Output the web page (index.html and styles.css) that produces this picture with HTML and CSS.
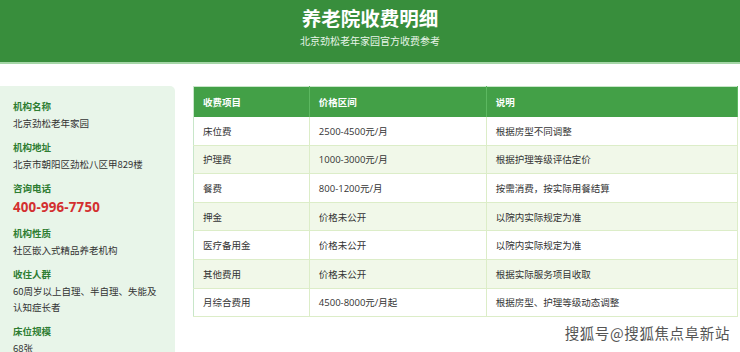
FILE: index.html
```html
<!DOCTYPE html>
<html lang="zh-CN">
<head>
<meta charset="utf-8">
<title>养老院收费明细</title>
<link rel="stylesheet" href="styles.css">
</head>
<body>
<header class="hero">
  <h1 class="hero-title">养老院收费明细</h1>
  <p class="hero-sub">北京劲松老年家园官方收费参考</p>
</header>
<main class="main">
  <aside class="side">
    <div class="item"><div class="label">机构名称</div><div class="value">北京劲松老年家园</div></div>
    <div class="item"><div class="label">机构地址</div><div class="value">北京市朝阳区劲松八区甲829楼</div></div>
    <div class="item"><div class="label">咨询电话</div><div class="phone">400-996-7750</div></div>
    <div class="item"><div class="label">机构性质</div><div class="value">社区嵌入式精品养老机构</div></div>
    <div class="item"><div class="label">收住人群</div><div class="value">60周岁以上自理、半自理、失能及认知症长者</div></div>
    <div class="item"><div class="label">床位规模</div><div class="value">68张</div></div>
  </aside>
  <section class="content">
    <table class="fees">
      <colgroup><col class="c1"><col class="c2"><col class="c3"></colgroup>
      <thead>
        <tr><th>收费项目</th><th>价格区间</th><th>说明</th></tr>
      </thead>
      <tbody>
        <tr><td>床位费</td><td>2500-4500元/月</td><td>根据房型不同调整</td></tr>
        <tr><td>护理费</td><td>1000-3000元/月</td><td>根据护理等级评估定价</td></tr>
        <tr><td>餐费</td><td>800-1200元/月</td><td>按需消费，按实际用餐结算</td></tr>
        <tr><td>押金</td><td>价格未公开</td><td>以院内实际规定为准</td></tr>
        <tr><td>医疗备用金</td><td>价格未公开</td><td>以院内实际规定为准</td></tr>
        <tr><td>其他费用</td><td>价格未公开</td><td>根据实际服务项目收取</td></tr>
        <tr><td>月综合费用</td><td>4500-8000元/月起</td><td>根据房型、护理等级动态调整</td></tr>
      </tbody>
    </table>
  </section>
</main>
<div class="watermark">搜狐号@搜狐焦点阜新站</div>
</body>
</html>
```
FILE: styles.css
```css
* { box-sizing: border-box; }
html, body { margin: 0; padding: 0; }
body {
  font-family: "Open Sans", "Noto Sans CJK SC", sans-serif;
  color: #333;
  background: #fff;
  width: 740px;
  height: 352px;
  overflow: hidden;
  position: relative;
}
.hero {
  background: #388e3c;
  height: 64px;
  border-bottom: 2px solid #a5d6a7;
  text-align: center;
  color: #fff;
  padding-top: 5px;
}
.hero-title {
  margin: 0;
  font-family: "Noto Sans CJK SC", sans-serif;
  font-size: 19.5px;
  line-height: 26px;
  font-weight: 700;
}
.hero-sub {
  margin: 3px 0 0;
  font-family: "Noto Sans CJK SC", sans-serif;
  font-size: 10px;
  line-height: 14px;
  color: #e8f5e9;
}
.main {
  display: flex;
  gap: 18px;
  padding: 22px 2px 0 0;
  align-items: flex-start;
}
.side {
  width: 175px;
  flex: none;
  background: #e8f5e9;
  border-radius: 0 5px 0 0;
  padding: 12px 16px 0 13px;
  height: 270px;
  font-family: "Noto Sans CJK SC", sans-serif;
}
.item { margin-bottom: 8px; }
.label {
  font-size: 9.5px;
  line-height: 16px;
  font-weight: 700;
  color: #2e7d32;
  margin-bottom: 1px;
}
.value {
  font-size: 9.5px;
  line-height: 16px;
  color: #333;
}
.phone {
  font-family: "Open Sans", sans-serif;
  font-size: 13.3px;
  line-height: 20px;
  font-weight: 700;
  color: #d32f2f;
  letter-spacing: 0.2px;
  margin-bottom: 2px;
}
.content { flex: 1; }
.fees {
  width: 100%;
  border-collapse: collapse;
  border: 1px solid #c8e6c9;
  font-size: 9.5px;
}
.c1 { width: 21.3%; }
.c2 { width: 32.5%; }
.fees th {
  background: #43a047;
  color: #fff;
  font-weight: 700;
  text-align: left;
  height: 30px;
  padding: 0 9px;
  border-right: 1px solid #5cb860;
  font-family: "Noto Sans CJK SC", sans-serif;
}
.fees td {
  height: 28.6px;
  padding: 0 9px;
  border-bottom: 1px solid #dcedc8;
  border-right: 1px solid #dcedc8;
}
.fees tbody tr:nth-child(even) td { background: #f1f8e9; }
.watermark {
  position: absolute;
  right: 10px;
  bottom: 9px;
  font-family: "Noto Sans CJK SC", sans-serif;
  font-size: 14.5px;
  color: #555;
  letter-spacing: 0.6px;
  text-shadow: 1px 1px 0 #fff, -1px -1px 0 #fff, 1px -1px 0 #fff, -1px 1px 0 #fff;
}
```
